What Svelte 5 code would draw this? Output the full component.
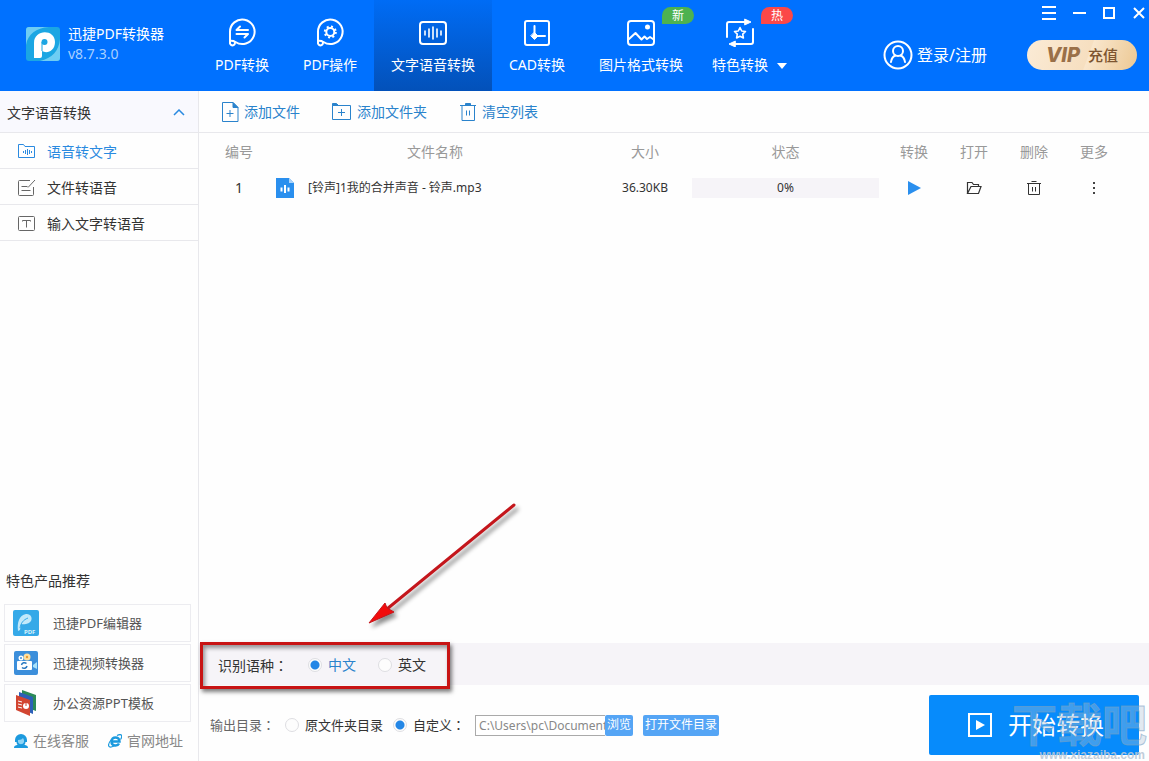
<script lang="ts">
	interface NavItem {
		id: string;
		label: string;
		badge?: string;
		tone?: 'new' | 'hot';
		more?: boolean;
	}

	const nav: NavItem[] = [
		{ id: 'pdf', label: 'PDF转换' },
		{ id: 'ops', label: 'PDF操作' },
		{ id: 'voice', label: '文字语音转换' },
		{ id: 'cad', label: 'CAD转换' },
		{ id: 'image', label: '图片格式转换', badge: '新', tone: 'new' },
		{ id: 'special', label: '特色转换', badge: '热', tone: 'hot', more: true }
	];

	const modes = [
		{ id: 'speech', label: '语音转文字' },
		{ id: 'file', label: '文件转语音' },
		{ id: 'text', label: '输入文字转语音' }
	];

	const products = [
		{ id: 'editor', label: '迅捷PDF编辑器' },
		{ id: 'video', label: '迅捷视频转换器' },
		{ id: 'ppt', label: '办公资源PPT模板' }
	];

	const files = [{ name: '[铃声]1我的合并声音 - 铃声.mp3', size: '36.30KB', progress: 0 }];

	let activeNav = $state('voice');
	let activeMode = $state('speech');
	let language = $state('zh');
	let output = $state('custom');
	let path = $state('C:\\Users\\pc\\Documents');
</script>

{#snippet navIcon(id: string)}
	<svg width="30" height="30" viewBox="0 0 30 30" fill="none" stroke="#fff" stroke-width="2" stroke-linecap="round" stroke-linejoin="round" aria-hidden="true">
		{#if id === 'pdf' || id === 'ops'}
			<path d="M3 26V15a12.300 12.300 0 1 1 5.500 10" />
			<path d="M3 26a2.500 2.500 0 1 0 4.700-1.300c-.9-1.200-2.700-1-4.700-1" />
			{#if id === 'pdf'}
				<path d="M13 9.500L9.500 13H21M9.500 17H21l-3.500 3.500" />
			{:else}
				<circle cx="15.300" cy="15" r="4" />
				<circle cx="15.300" cy="15" r="5.500" stroke-dasharray="2 2.320" stroke-linecap="butt" />
			{/if}
		{:else if id === 'voice'}
			<rect x="2" y="5" width="26" height="22" rx="3" />
			<path d="M7 14v4M11 12v8M15 10v12M19 12v8M23 14v4" stroke-width="1.600" />
		{:else if id === 'cad'}
			<rect x="3" y="4" width="24" height="24" rx="2" />
			<path d="M12.500 9v10H23" />
			<path d="M12.500 15.500l3.500 3.500-3.500 3.500L9 19z" fill="#fff" stroke-width="1" />
		{:else if id === 'image'}
			<rect x="2" y="4" width="26" height="24" rx="3" />
			<path d="M3 22l6.500-6 6 6.500 3-3 2.500 2.500 3-2 3 2" />
			<circle cx="21.500" cy="10" r="1.500" fill="#fff" />
		{:else}
			<path d="M2 20V7a2 2 0 0 1 2-2h16M28 12v13a2 2 0 0 1-2 2H10" />
			<path d="M20 2.200l6 2.800-6 2.800zM10 24.200L4 27l6 2.800z" fill="#fff" stroke-width="1" />
			<path d="M15 10.500l1.700 3.500 3.800.5-2.800 2.700.7 3.800-3.400-1.800-3.400 1.800.7-3.800-2.800-2.700 3.800-.5z" stroke-width="1.600" />
		{/if}
	</svg>
{/snippet}

{#snippet modeIcon(id: string)}
	<svg width="18" height="18" viewBox="0 0 18 18" fill="none" stroke="currentColor" aria-hidden="true">
		{#if id === 'speech'}
			<path d="M.5 14.500V1.500h5l1.500 2h9.500v11zM5.500 8v2M7.500 7v4M9.500 6v6M11.500 7v4M13.500 8v2" />
		{:else if id === 'file'}
			<path d="M12 1.500H1.500a1 1 0 0 0-1 1v13a1 1 0 0 0 1 1h13a1 1 0 0 0 1-1V8M3.500 7.500h6M3.500 11.500h9M10 8.500l7-7.500" />
		{:else}
			<rect x=".5" y="1.500" width="16" height="14" rx="1" />
			<path d="M4.500 6.500v-1h8v1M8.500 5.500v7" />
		{/if}
	</svg>
{/snippet}

{#snippet productIcon(id: string)}
	<svg width="26" height="26" viewBox="0 0 26 26" aria-hidden="true">
		{#if id === 'editor'}
			<rect width="26" height="26" rx="2" fill="#35a9e8" />
			<path d="M5 21C4 13 6 5 13 4c7-1 8 9 0 10-3 .4-5 0-5 0l-1 6z" fill="#c2e9fa" />
			<path d="M7 18c1-5 3-8 8-10" stroke="#35a9e8" fill="none" />
			<text x="11" y="24" font-size="6" font-weight="700" fill="#d9f2fc">PDF</text>
		{:else if id === 'video'}
			<rect x="1" y="1" width="24" height="24" rx="2" fill="#3c8fdb" />
			<circle cx="8" cy="8" r="2.500" fill="#fff" /><circle cx="14" cy="7" r="3.500" fill="#ffe0a0" />
			<circle cx="8" cy="8" r="1" fill="#3c8fdb" /><circle cx="14" cy="7" r="1.200" fill="#e89b34" />
			<rect x="4" y="11" width="15" height="9" rx="1" fill="#fff" />
			<path d="M20 15l4-3v7l-4-2z" fill="#a9e2fa" />
			<path d="M8.500 15a3 3 0 0 1 5-1.500M14 16a3 3 0 0 1-5 1.500" fill="none" stroke="#2878c0" stroke-width="1.500" />
		{:else}
			<path d="M9 0l14 5v16L9 16z" fill="#2b8a58" />
			<path d="M6 2l14 5v17L6 18z" fill="#2c5fb8" />
			<path d="M3 5l14 5v16L3 20z" fill="#d24531" />
			<path d="M5 11l4 1M5 14l4 1M5 17l4 1" stroke="#fff" />
			<circle cx="13" cy="16" r="3" fill="#fff" /><path d="M13 16v-3" stroke="#d24531" />
		{/if}
	</svg>
{/snippet}

<div class="app">
	<header class="top">
		<div class="brand">
			<svg width="34" height="34" viewBox="0 0 34 34" aria-hidden="true">
				<rect width="34" height="34" rx="3" fill="#1ba6e3" />
				<path d="M0 18V3a3 3 0 0 1 3-3h20C10 1 2 7 0 18zM34 12v19a3 3 0 0 1-3 3H14c12-3 19-10 20-22z" fill="#6fcdf3" />
				<path d="M8 31V16C8 2 29 2 29 15c0 9-8 12-13 9v5a2 2 0 0 1-2 2z" fill="#fff" />
				<circle cx="18.500" cy="15" r="3" fill="#1ba6e3" />
				<path d="M16 15v9" stroke="#1ba6e3" />
			</svg>
			<div class="brand-text">
				<span>迅捷PDF转换器</span>
				<span class="version">v8.7.3.0</span>
			</div>
		</div>

		<nav class="nav">
			{#each nav as item (item.id)}
				<button class="nav-item" class:active={activeNav === item.id} onclick={() => (activeNav = item.id)}>
					<span class="nav-stack">
						<span class="nav-icon">
							{@render navIcon(item.id)}
							{#if item.badge}<span class="badge {item.tone}">{item.badge}</span>{/if}
						</span>
						<span>{item.label}</span>
					</span>
					{#if item.more}
						<svg class="caret" width="12" height="20" viewBox="0 0 12 20" aria-hidden="true"><path d="M1 8h10l-5 6z" fill="#fff" /></svg>
					{/if}
				</button>
			{/each}
		</nav>

		<div class="top-right">
			<div class="win">
				<button aria-label="菜单"><svg width="14" height="14" viewBox="0 0 14 14"><path d="M0 1h14M0 7h14M0 13h14" /></svg></button>
				<button aria-label="最小化"><svg width="14" height="14" viewBox="0 0 14 14"><path d="M1 7h13" /></svg></button>
				<button aria-label="最大化"><svg width="14" height="14" viewBox="0 0 14 14"><path d="M2 2h10v10H2z" /></svg></button>
				<button aria-label="关闭"><svg width="14" height="14" viewBox="0 0 14 14"><path d="M2 2l10 10M12 2L2 12" /></svg></button>
			</div>
			<div class="account">
				<button class="login">
					<svg width="30" height="30" viewBox="0 0 30 30" fill="none" stroke="#fff" stroke-width="2" stroke-linecap="round" aria-hidden="true">
						<circle cx="15" cy="15" r="13.500" />
						<circle cx="15" cy="11" r="5" />
						<path d="M8 22c.5-4 2-5.500 4.500-6.500M22 22c-.5-4-2-5.500-4.500-6.500" />
					</svg>
					登录/注册
				</button>
				<button class="vip"><em>VIP</em>充值</button>
			</div>
		</div>
	</header>

	<div class="body">
		<aside class="side">
			<button class="side-title">
				文字语音转换
				<svg width="12" height="8" viewBox="0 0 12 8" fill="none" stroke="#2a8ae0" stroke-width="1.500" aria-hidden="true"><path d="M1 6l5-5 5 5" /></svg>
			</button>
			{#each modes as mode (mode.id)}
				<button class="mode" class:active={activeMode === mode.id} onclick={() => (activeMode = mode.id)}>
					{@render modeIcon(mode.id)}
					{mode.label}
				</button>
			{/each}

			<section class="products">
				<h2>特色产品推荐</h2>
				{#each products as product (product.id)}
					<a class="product" href="#{product.id}">
						{@render productIcon(product.id)}
						{product.label}
					</a>
				{/each}
				<div class="links">
					<a href="#service">
						<svg width="14" height="14" viewBox="0 0 14 14" aria-hidden="true">
							<path d="M1 6a6 6 0 0 1 12 0v2h-1.500a4.500 4.500 0 0 1-9 0H1z" fill="#1c9ade" />
							<path d="M4 6c3 0 4-1 5-2l1 2v2c-1 3-5 3-6 0z" fill="#8fd4f5" />
							<path d="M0 14c0-3 3-3 4-3l3 1 3-1c1 0 4 0 4 3z" fill="#1c9ade" />
						</svg>
						在线客服
					</a>
					<a href="#site">
						<svg width="14" height="14" viewBox="0 0 14 14" fill="none" stroke="#1c9ade" aria-hidden="true">
							<path d="M3.500 7.500h8C11.500 2 3.500 2 3.500 7.500c0 5 6 5 7.500 2" stroke-width="2.500" />
							<path d="M9 1.500c6-3 5 2 3.500 4M3 6c-4 5-3 9 3 6" stroke-width="1.200" />
						</svg>
						官网地址
					</a>
				</div>
			</section>
		</aside>

		<main class="main">
			<div class="tools">
				<button>
					<svg width="18" height="20" viewBox="0 0 18 20" fill="none" stroke="currentColor" aria-hidden="true">
						<path d="M1.500.5H12l5 5v14H1.500zM5.500 11.500h7M9 8v7" /><path d="M12 .5v5h5z" fill="currentColor" />
					</svg>
					添加文件
				</button>
				<button>
					<svg width="20" height="20" viewBox="0 0 20 20" fill="none" stroke="currentColor" aria-hidden="true">
						<path d="M.5 3.500h18v14H.5zM6 10.500h7M9.500 7v7" /><path d="M.5 3.500v-2h4l2 2z" fill="currentColor" />
					</svg>
					添加文件夹
				</button>
				<button>
					<svg width="18" height="20" viewBox="0 0 18 20" fill="none" stroke="currentColor" aria-hidden="true">
						<path d="M1 3.500h16M3 3.500v15h12.500v-15M7.500 8.500v5M10.500 8.500v5" /><path d="M6.500 1.500h5v2h-5z" fill="currentColor" />
					</svg>
					清空列表
				</button>
			</div>

			<div class="list">
				<table>
					<colgroup>
						<col class="c-no" /><col /><col class="c-size" /><col class="c-state" />
						<col class="c-act" /><col class="c-act" /><col class="c-act" /><col class="c-act" />
					</colgroup>
					<thead>
						<tr><th>编号</th><th>文件名称</th><th>大小</th><th class="state">状态</th><th>转换</th><th>打开</th><th>删除</th><th>更多</th></tr>
					</thead>
					<tbody>
						{#each files as file, i (file.name)}
							<tr>
								<td class="num">{i + 1}</td>
								<td>
									<div class="file">
										<svg width="20" height="20" viewBox="0 0 20 20" aria-hidden="true">
											<path d="M1 0h13l5 5v15H1z" fill="#2a8fee" /><path d="M14 0l5 5h-5z" fill="#a9d3fa" />
											<path d="M6.500 9.500v4M10 7v8M13.500 9.500v4" stroke="#fff" stroke-width="2" />
										</svg>
										{file.name}
									</div>
								</td>
								<td>{file.size}</td>
								<td class="state"><div class="progress"><div class="fill" style="width: {file.progress}%"></div><span>{file.progress}%</span></div></td>
								<td><button aria-label="转换"><svg width="16" height="16" viewBox="0 0 16 16"><path d="M2 1l13 7-13 7z" fill="#2a8fee" /></svg></button></td>
								<td><button aria-label="打开"><svg width="16" height="16" viewBox="0 0 16 16" fill="none" stroke="#333" stroke-width="1.200"><path d="M1.500 13.500v-11H6l1.500 2h5v2M1.500 13.500h11l2.500-7H5z" /></svg></button></td>
								<td><button aria-label="删除"><svg width="16" height="16" viewBox="0 0 16 16" fill="none" stroke="#333"><path d="M1 3.500h14M5.500 1.500h5M2.500 3.500v11h11v-11M6.500 7v4.500M9.500 7v4.500" /></svg></button></td>
								<td><button aria-label="更多"><svg width="16" height="16" viewBox="0 0 16 16" fill="#444"><path d="M7 2h2v2H7zM7 7h2v2H7zM7 12h2v2H7z" /></svg></button></td>
							</tr>
						{/each}
					</tbody>
				</table>
			</div>

			<div class="lang">
				<span class="lang-label">识别语种<span class="colon">：</span></span>
				<label class:on={language === 'zh'}><input type="radio" name="language" value="zh" bind:group={language} />中文</label>
				<label><input type="radio" name="language" value="en" bind:group={language} />英文</label>
				<!-- callout pointing at the language choice -->
				<div class="mark"></div>
				<svg class="arrow" width="156" height="132" viewBox="0 0 156 132" aria-hidden="true">
					<path d="M148 6L21 110" stroke="#c4161c" stroke-width="3" stroke-linecap="round" />
					<path d="M3 124L19 104l2 5 7 4z" fill="#f20c0c" stroke="#c4161c" />
				</svg>
			</div>

			<footer class="foot">
				<span class="foot-label">输出目录<span class="colon">：</span></span>
				<label><input type="radio" name="output" value="source" bind:group={output} />原文件夹目录</label>
				<label><input type="radio" name="output" value="custom" bind:group={output} /><span>自定义<span class="colon">：</span></span></label>
				<div class="path">
					<input type="text" aria-label="输出路径" bind:value={path} />
					<button class="small">浏览</button>
				</div>
				<button class="small">打开文件目录</button>
				<button class="start">
					<svg width="24" height="24" viewBox="0 0 24 24" aria-hidden="true">
						<path d="M1 1h22v22H1z" fill="none" stroke="#fff" stroke-width="2" /><path d="M8 7l9 5-9 5z" fill="#fff" />
					</svg>
					开始转换
				</button>
			</footer>
		</main>
	</div>

	<div class="stamp" aria-hidden="true">
		<span class="stamp-name">下载吧</span>
		<span class="stamp-url">www.xiazaiba.com</span>
	</div>
</div>

<style>
	:global(body) { margin: 0; }

	.app {
		position: relative;
		display: flex;
		flex-direction: column;
		min-height: 100vh;
		overflow: hidden;
		background: #fefefe;
		color: #333;
		font-family: 'Noto Sans', 'Noto Sans CJK SC', sans-serif;
		font-size: 14px;
		line-height: 20px;
	}
	.app * { box-sizing: border-box; }

	button {
		padding: 0;
		border: 0;
		background: none;
		color: inherit;
		font: inherit;
		white-space: nowrap;
		cursor: pointer;
	}
	a { color: inherit; text-decoration: none; }
	svg { display: block; flex-shrink: 0; }

	/* header */
	.top {
		display: flex;
		height: 91px;
		background: #0071ff;
		color: #fff;
	}
	.brand {
		display: flex;
		align-items: flex-start;
		gap: 8px;
		width: 198px;
		padding: 27px 0 0 26px;
	}
	.brand-text {
		display: flex;
		flex-direction: column;
		margin-top: -3px;
	}
	.version { color: #a9d0ff; }

	.nav { display: flex; }
	.nav-item {
		display: flex;
		align-items: flex-end;
		gap: 8px;
		padding: 0 17px 16px;
	}
	.nav-item:last-child { padding-left: 12px; }
	.nav-item.active { background: linear-gradient(#006cf5, #0351b9); }
	.nav-stack {
		display: flex;
		flex-direction: column;
		align-items: center;
		gap: 8px;
	}
	.nav-icon { position: relative; }
	.badge {
		position: absolute;
		top: -10px;
		left: 36px;
		width: 32px;
		border-radius: 9px 9px 9px 0;
		font-size: 12px;
		line-height: 17px;
	}
	.badge.new { background: #4db250; }
	.badge.hot { background: #fb4848; }

	.top-right {
		display: flex;
		flex-direction: column;
		align-items: flex-end;
		gap: 20px;
		margin-left: auto;
		padding-top: 6px;
	}
	.win {
		display: flex;
		gap: 16px;
		padding-right: 3px;
	}
	.win svg { fill: none; stroke: #fff; stroke-width: 2; }
	.account {
		display: flex;
		gap: 40px;
		padding-right: 12px;
	}
	.login {
		display: flex;
		align-items: center;
		gap: 4px;
		font-size: 16px;
	}
	.vip {
		display: flex;
		align-items: center;
		justify-content: center;
		gap: 8px;
		width: 110px;
		height: 30px;
		border-radius: 15px;
		background: linear-gradient(110deg, #fbebd6, #f6dfc0 55%, #f9e6cc 56%, #ecc893);
		color: #7d5530;
		font-size: 15px;
		font-weight: 500;
	}
	.vip em {
		color: #9a7048;
		font-family: Inter, sans-serif;
		font-size: 20px;
		font-weight: 800;
	}

	/* sidebar */
	.body { display: flex; flex: 1; }
	.side {
		display: flex;
		flex-direction: column;
		width: 199px;
		flex-shrink: 0;
		border-right: 1px solid #e8e8ec;
	}
	.side-title {
		display: flex;
		align-items: center;
		justify-content: space-between;
		height: 42px;
		padding: 2px 13px 0 7px;
		border-bottom: 1px solid #e8e8ec;
		background: #f9f9fe;
	}
	.mode {
		display: flex;
		align-items: center;
		gap: 11px;
		height: 36px;
		padding: 2px 18px 0;
		border-bottom: 1px solid #e8e8ec;
	}
	.mode svg { color: #666; }
	.mode.active,
	.mode.active svg { color: #2a8ae0; }

	.products {
		display: flex;
		flex-direction: column;
		gap: 2px;
		margin-top: auto;
		padding: 0 7px 10px 4px;
	}
	h2 {
		margin: 0 0 11px 2px;
		font-size: 14px;
		font-weight: 400;
	}
	.product {
		display: flex;
		align-items: center;
		gap: 14px;
		height: 38px;
		padding: 0 8px;
		border: 1px solid #ececf0;
		color: #555;
		font-size: 13px;
	}
	.links {
		display: flex;
		justify-content: space-between;
		padding: 7px 8px 0 10px;
		color: #888;
	}
	.links a { display: flex; align-items: center; gap: 5px; }

	/* file list */
	.main {
		display: flex;
		flex-direction: column;
		flex: 1;
		min-width: 0;
	}
	.tools {
		display: flex;
		align-items: center;
		gap: 32px;
		height: 42px;
		padding: 1px 22px 0;
		border-bottom: 1px solid #e8e8ec;
		color: #2a83cc;
	}
	.tools button { display: flex; align-items: center; gap: 5px; }

	.list { flex: 1; padding: 0 25px 0 8px; }
	table {
		width: 100%;
		table-layout: fixed;
		border-collapse: collapse;
	}
	.c-no { width: 64px; }
	.c-size { width: 92px; }
	.c-state { width: 193px; }
	.c-act { width: 60px; }
	th {
		height: 38px;
		padding: 0;
		color: #999;
		font-weight: 400;
	}
	td {
		height: 34px;
		padding: 0;
		font-size: 12px;
		text-align: center;
	}
	th.state,
	td.state { padding: 0 5px 0 1px; }
	td.num { font-size: 14px; }
	td button { display: block; margin: 0 auto; }
	.file {
		display: flex;
		align-items: center;
		gap: 13px;
		padding-left: 4px;
	}
	.progress {
		position: relative;
		height: 20px;
		background: #f6f4f8;
	}
	.fill { position: absolute; height: 100%; background: #9dcbf8; }
	.progress span { position: relative; }

	/* options */
	label { display: flex; align-items: center; gap: 6px; white-space: nowrap; }
	input[type='radio'] {
		appearance: none;
		width: 14px;
		height: 14px;
		margin: 0;
		border: 1px solid #dedee2;
		border-radius: 50%;
		background: #fdfdfd;
	}
	input[type='radio']:checked { background: radial-gradient(#2487e6 4px, #fdfdfd 5px); }
	/* TC glyph sits in the middle of its box */
	.colon { font-family: 'Noto Sans CJK TC', sans-serif; }

	.lang {
		position: relative;
		display: flex;
		align-items: center;
		gap: 22px;
		height: 42px;
		padding: 2px 19px 0;
		background: #f6f4f8;
	}
	.lang-label { margin-right: -2px; }
	.lang .on { color: #2a83cc; }
	.mark {
		position: absolute;
		top: -1px;
		left: 1px;
		width: 250px;
		height: 47px;
		border: 3px solid #c81414;
		box-shadow: 2px 3px 4px rgba(0, 0, 0, 0.5), inset 2px 3px 4px rgba(0, 0, 0, 0.4);
		pointer-events: none;
	}
	.arrow {
		position: absolute;
		bottom: 54px;
		left: 167px;
		filter: drop-shadow(3px 4px 2px rgba(0, 0, 0, 0.45));
		pointer-events: none;
	}

	.foot {
		display: flex;
		align-items: center;
		gap: 10px;
		padding: 10px 10px 6px 11px;
		font-size: 13px;
	}
	.foot-label { color: #666; }
	.path { display: flex; }
	.path input {
		width: 130px;
		height: 21px;
		padding: 0 0 0 3px;
		border: 1px solid #aaa;
		border-right: 0;
		border-radius: 0;
		background: #fff;
		color: #888;
		font: inherit;
		font-size: 12px;
	}
	.small {
		height: 21px;
		padding: 0 2px;
		border-radius: 2px;
		background: #55a5f5;
		color: #fff;
		font-size: 12px;
	}
	.start {
		display: flex;
		align-items: center;
		justify-content: center;
		gap: 16px;
		width: 210px;
		height: 60px;
		margin-left: auto;
		padding-left: 4px;
		border-radius: 2px;
		background: #078bfb;
		color: #fff;
		font-size: 24px;
	}

	/* corner stamp */
	.stamp {
		position: absolute;
		right: 2px;
		bottom: 0;
		display: flex;
		flex-direction: column;
		align-items: flex-end;
		color: rgba(170, 195, 215, 0.35);
		font-weight: 700;
		pointer-events: none;
	}
	.stamp-name {
		font-size: 45px;
		line-height: 48px;
		-webkit-text-stroke: 1px rgba(120, 160, 195, 0.6);
	}
	.stamp-url {
		padding-right: 2px;
		color: rgba(185, 200, 215, 0.9);
		font-family: 'Liberation Sans', sans-serif;
		font-size: 12px;
		line-height: 12px;
	}
</style>
